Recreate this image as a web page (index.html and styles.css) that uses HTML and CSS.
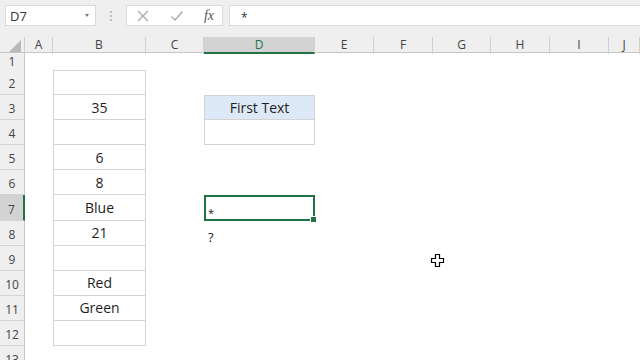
FILE: index.html
```html
<!DOCTYPE html>
<html>
<head>
<meta charset="utf-8">
<link rel="stylesheet" href="styles.css">
</head>
<body>
<div class="app">
  <div class="toolbar">
    <div class="namebox"><span>D7</span><span class="caret"></span></div>
    <div class="dots"><i></i><i></i><i></i></div>
    <div class="fbtns">
      <svg class="ico" width="14" height="14" viewBox="0 0 14 14"><path d="M2 2 L12 12 M12 2 L2 12" stroke="#a6a6a6" stroke-width="1.2" fill="none"/></svg>
      <svg class="ico" width="14" height="14" viewBox="0 0 14 14"><path d="M1.5 7.5 L5 11 L12.5 2.5" stroke="#a6a6a6" stroke-width="1.2" fill="none"/></svg>
      <span class="fx">fx</span>
    </div>
    <div class="finput">*</div>
  </div>
  <div class="colheads">
    <div class="corner"><svg width="12" height="12" viewBox="0 0 12 12"><path d="M12 0 L12 12 L0 12 Z" fill="#b9b9b9"/></svg></div>
    <div class="ch">A</div><div class="ch">B</div><div class="ch">C</div><div class="ch chsel">D</div><div class="ch">E</div><div class="ch">F</div><div class="ch">G</div><div class="ch">H</div><div class="ch">I</div><div class="ch">J</div>
  </div>
  <div class="sheet">
    <div class="row r1"><div class="rh">1</div><div class="c"></div><div class="c"></div><div class="c"></div><div class="c"></div></div>
    <div class="row"><div class="rh">2</div><div class="c"></div><div class="c bx bxtop"></div><div class="c"></div><div class="c"></div></div>
    <div class="row"><div class="rh">3</div><div class="c"></div><div class="c bx">35</div><div class="c"></div><div class="c dbox dhead">First Text</div></div>
    <div class="row"><div class="rh">4</div><div class="c"></div><div class="c bx"></div><div class="c"></div><div class="c dbox"></div></div>
    <div class="row"><div class="rh">5</div><div class="c"></div><div class="c bx">6</div><div class="c"></div><div class="c"></div></div>
    <div class="row"><div class="rh">6</div><div class="c"></div><div class="c bx">8</div><div class="c"></div><div class="c"></div></div>
    <div class="row"><div class="rh rhsel">7</div><div class="c"></div><div class="c bx">Blue</div><div class="c"></div><div class="c lt sel"><span class="ast">*</span></div></div>
    <div class="row"><div class="rh">8</div><div class="c"></div><div class="c bx">21</div><div class="c"></div><div class="c lt q">?</div></div>
    <div class="row"><div class="rh">9</div><div class="c"></div><div class="c bx"></div><div class="c"></div><div class="c"></div></div>
    <div class="row"><div class="rh">10</div><div class="c"></div><div class="c bx">Red</div><div class="c"></div><div class="c"></div></div>
    <div class="row"><div class="rh">11</div><div class="c"></div><div class="c bx">Green</div><div class="c"></div><div class="c"></div></div>
    <div class="row"><div class="rh">12</div><div class="c"></div><div class="c bx"></div><div class="c"></div><div class="c"></div></div>
    <div class="row"><div class="rh">13</div><div class="c"></div><div class="c"></div><div class="c"></div><div class="c"></div></div>
  </div>
  <svg class="cursor" width="15" height="15" viewBox="0 0 15 15"><path d="M5.5 1.5 H9.5 V5.5 H13.5 V9.5 H9.5 V13.5 H5.5 V9.5 H1.5 V5.5 H5.5 Z" fill="#fff" stroke="#000" stroke-width="1.2"/></svg>
</div>
</body>
</html>
```

FILE: styles.css
```css
* { box-sizing: border-box; }
html, body { margin: 0; padding: 0; }
body { background: #fff; font-family: "Open Sans", "Liberation Sans", sans-serif; color: #222; overflow: hidden; }
.app { position: relative; width: 640px; height: 360px; overflow: hidden; }

.toolbar { height: 37px; background: #efefef; display: flex; align-items: flex-start; padding-top: 5px; padding-left: 5px; }
.namebox { width: 91px; height: 21px; background: #fff; border: 1px solid #dadada; display: flex; align-items: center; justify-content: space-between; padding: 0 6px 0 4px; font-size: 13px; color: #333; }
.caret { width: 0; height: 0; border-left: 2.5px solid transparent; border-right: 2.5px solid transparent; border-top: 3px solid #777; }
.dots { width: 30px; height: 21px; display: flex; flex-direction: column; align-items: center; justify-content: center; gap: 2px; }
.dots i { width: 2px; height: 2px; background: #bdbdbd; display: block; }
.fbtns { width: 97px; height: 21px; background: #fff; border: 1px solid #dadada; display: flex; align-items: center; justify-content: space-between; padding: 0 8px 0 9px; }
.ico { display: block; }
.fx { font-family: "Liberation Serif", serif; font-style: italic; font-size: 14px; color: #555; }
.finput { flex: 1; height: 21px; margin-left: 6px; background: #fff; border: 1px solid #dadada; border-right: none; font-size: 12px; padding: 3px 0 0 11px; color: #333; }

.colheads, .row { display: grid; grid-template-columns: 25px 28px 93px 58px 111px 59px 59px 58px 59px 59px 1fr; }
.colheads { height: 16px; background: #efefef; border-bottom: 1px solid #c6c6c6; }
.corner { display: flex; align-items: flex-end; justify-content: flex-end; padding: 0 3px 2px 0; border-right: 1px solid #d0d0d0; }
.ch { border-right: 1px solid #d0d0d0; font-size: 12px; color: #444; text-align: center; line-height: 15px; }
.chsel { background: #d3d3d3; border-bottom: 2px solid #217346; color: #217346; }

.row { height: 25.1px; }
.row.r1 { height: 17px; }
.rh { background: #efefef; border-right: 1px solid #c6c6c6; border-bottom: 1px solid #d4d4d4; font-size: 12px; color: #444; text-align: center; display: flex; align-items: flex-end; justify-content: center; padding-bottom: 2px; }
.rhsel { background: #d3d3d3; border-right: 2px solid #217346; }
.c { font-size: 14px; display: flex; align-items: center; justify-content: center; color: #1e1e1e; }
.bx { border-left: 1px solid #d4d4d4; border-right: 1px solid #d4d4d4; border-bottom: 1px solid #d4d4d4; }
.bxtop { border-top: 1px solid #d4d4d4; }
.dbox { border: 1px solid #d4d4d4; border-top: none; }
.dhead { background: #dde9f7; border-top: 1px solid #d4d4d4; }
.lt { justify-content: flex-start; align-items: flex-end; padding-left: 4px; font-size: 13px; }
.q { padding-bottom: 0; }
.ast { font-size: 11px; line-height: 1; margin-bottom: 1px; }
.sel { position: relative; border: 2px solid #217346; padding-left: 2px; }
.sel::after { content: ""; position: absolute; right: -4px; bottom: -4px; width: 5px; height: 5px; background: #217346; border: 1px solid #fff; }
.cursor { position: absolute; left: 430px; top: 253px; }
```
